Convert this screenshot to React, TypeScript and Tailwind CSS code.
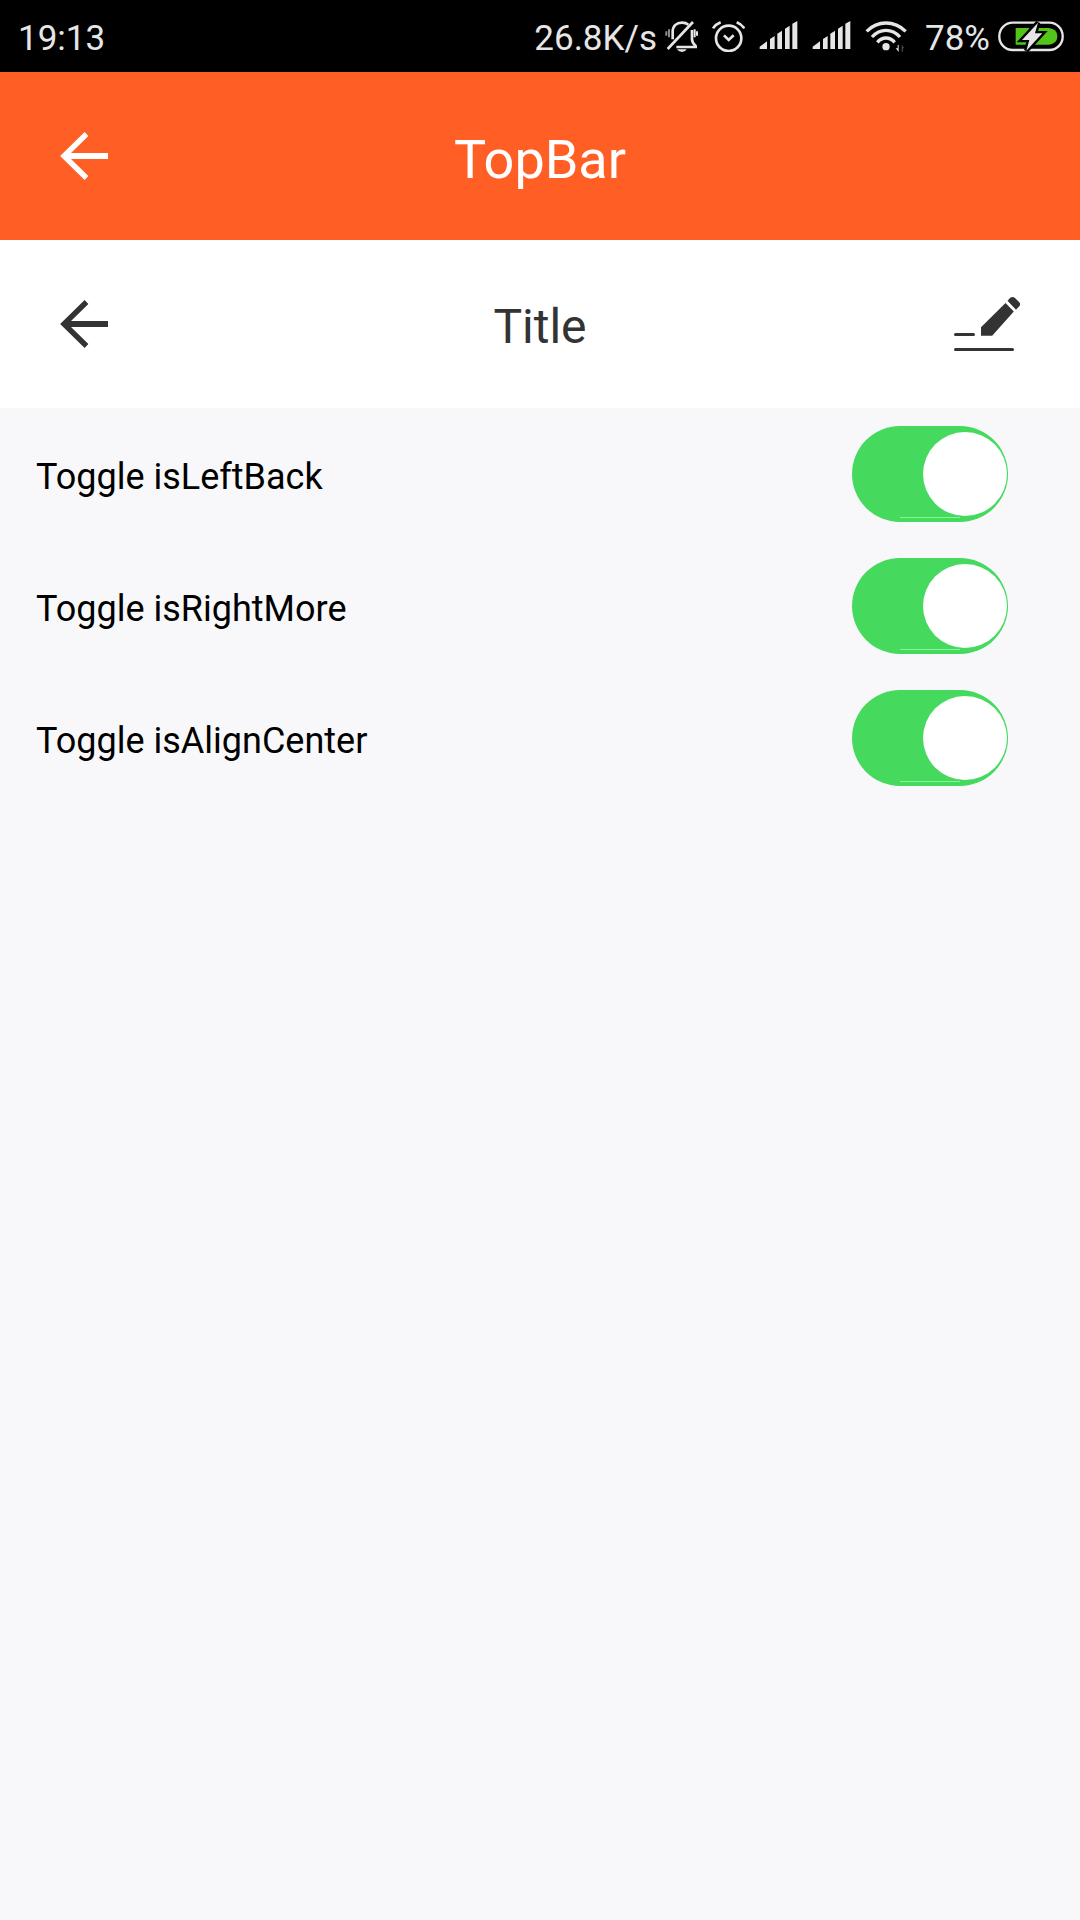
import { useState, type ReactNode } from 'react'

type SwitchRowProps = {
  id: string
  label: string
  checked: boolean
  onChange: (value: boolean) => void
}

type TopBarProps = {
  title: string
  className: string
  titleClassName: string
  isLeftBack?: boolean
  isAlignCenter?: boolean
  right?: ReactNode
}

export default function App() {
  const [isLeftBack, setIsLeftBack] = useState(true)
  const [isRightMore, setIsRightMore] = useState(true)
  const [isAlignCenter, setIsAlignCenter] = useState(true)

  return (
    <div className="min-h-screen bg-[#f8f8fa] font-[Roboto,sans-serif]">
      <StatusBar />

      <header>
        <TopBar
          title="TopBar"
          className="bg-[#ff5f24] text-white"
          titleClassName="pt-2 text-[54px]"
        />
      </header>

      <main>
        <TopBar
          title="Title"
          className="bg-white text-[#333333]"
          titleClassName="pt-1.5 text-5xl"
          isLeftBack={isLeftBack}
          isAlignCenter={isAlignCenter}
          right={
            isRightMore && (
              <button type="button" aria-label="Edit">
                <EditIcon />
              </button>
            )
          }
        />

        <SwitchRow
          id="left-back"
          label="Toggle isLeftBack"
          checked={isLeftBack}
          onChange={setIsLeftBack}
        />
        <SwitchRow
          id="right-more"
          label="Toggle isRightMore"
          checked={isRightMore}
          onChange={setIsRightMore}
        />
        <SwitchRow
          id="align-center"
          label="Toggle isAlignCenter"
          checked={isAlignCenter}
          onChange={setIsAlignCenter}
        />
      </main>
    </div>
  )
}

function TopBar({
  title,
  className,
  titleClassName,
  isLeftBack = true,
  isAlignCenter = true,
  right,
}: TopBarProps) {
  return (
    <div
      className={`grid h-[168px] items-center px-[60px] ${
        isAlignCenter ? 'grid-cols-[1fr_auto_1fr]' : 'grid-cols-[auto_1fr_auto] gap-6'
      } ${className}`}
    >
      <div className="flex items-center">
        {isLeftBack && (
          <button type="button" aria-label="Back">
            <BackIcon />
          </button>
        )}
      </div>
      <h1 className={`leading-none ${titleClassName}`}>{title}</h1>
      <div className="flex items-center justify-end">{right}</div>
    </div>
  )
}

function SwitchRow({ id, label, checked, onChange }: SwitchRowProps) {
  return (
    <div className="flex h-[132px] items-center justify-between pr-[72px] pl-9">
      <label htmlFor={id} className="pt-1.5 text-4xl leading-none text-black">
        {label}
      </label>
      <input
        id={id}
        type="checkbox"
        checked={checked}
        onChange={(e) => onChange(e.target.checked)}
        className="relative flex h-24 w-[156px] cursor-pointer appearance-none items-center rounded-full bg-gray-300 px-px before:size-[84px] before:rounded-full before:bg-white after:absolute after:bottom-1 after:left-12 after:h-px after:w-15 checked:justify-end checked:bg-[#45d95e] checked:after:bg-[#86f596]"
      />
    </div>
  )
}

function StatusBar() {
  return (
    <div className="flex h-[72px] items-center justify-between bg-black pr-4 pl-[18px] text-[35px] leading-none text-[#e6e6e6]">
      <span className="pt-1">19:13</span>
      <div className="flex items-center gap-3.5">
        <div className="flex items-center gap-2">
          <span className="pt-1">26.8K/s</span>
          <MuteIcon />
        </div>
        <AlarmIcon />
        <SignalIcon />
        <SignalIcon />
        <WifiIcon />
        <div className="flex items-center gap-2 pl-1">
          <span className="pt-1">78%</span>
          <BatteryIcon />
        </div>
      </div>
    </div>
  )
}

/* Icons */
function BackIcon() {
  return (
    <svg width="48" height="48" viewBox="0 0 48 48" fill="none" stroke="currentColor">
      <path d="M26.5 2 4 24l22.500 22" strokeWidth="5.400" />
      <path d="M5 24h43" strokeWidth="6" />
    </svg>
  )
}

function EditIcon() {
  return (
    <svg width="66" height="56" viewBox="0 0 66 56" fill="currentColor">
      <rect x="0" y="37" width="21" height="3" rx="1.500" />
      <rect x="0" y="52" width="60" height="3" rx="1.500" />
      <path d="M27 31.300 51.500 7l8.300 8.500L38.200 39.700H27z" />
      <path d="M53.500 4.800 56 2q2.500-2 5 0l4 4q2 2 .5 4l-3.500 3.700z" />
    </svg>
  )
}

function MuteIcon() {
  return (
    <svg width="33" height="32" viewBox="0 0 99 96" fill="none" stroke="currentColor" strokeWidth="8">
      <path d="M23 58V36C23 18 35 8 51 8q12 0 19 6" />
      <path d="M81 30v28c0 8 4 14 11 20v3H34" />
      <path d="M8 87 84 6" />
      <path d="M36 88h29q-4 8-14 8t-15-8z" fill="currentColor" stroke="none" />
      <path d="M4 34v13M12 28v24" strokeWidth="6" opacity="0.600" />
      <path d="M89 28v24M96 34v13" strokeWidth="6" />
    </svg>
  )
}

function AlarmIcon() {
  return (
    <svg width="33" height="32" viewBox="0 0 99 96" fill="none" stroke="currentColor" strokeWidth="8">
      <circle cx="50" cy="55" r="38" />
      <path d="m36 46 14 14 15-14" />
      <path d="M3 25Q11 13 26 7M97 25Q89 13 74 7" />
    </svg>
  )
}

function SignalIcon() {
  return (
    <svg width="39" height="32" viewBox="0 0 117 96" fill="currentColor">
      <path d="M2 87v-7l22-16v23zM33 87V57l14-9v39zM55 87V41l14-9v55zM78 87V26l14-9v70zM100 87V11l15-8v84z" />
    </svg>
  )
}

function WifiIcon() {
  return (
    <svg width="42" height="32" viewBox="0 0 126 96" fill="none" stroke="currentColor" strokeWidth="10">
      <path d="M5 34Q30 9 63 9t59 25" />
      <path d="M21 51q18-20 42-20t42 20" />
      <path d="M37 67q11-13 26-13t26 13" />
      <circle cx="63" cy="80" r="11" fill="currentColor" stroke="none" />
      <path d="M101 75v21l-9-11h6V75z" fill="currentColor" stroke="none" />
      <path d="M110 95V74l9 11h-5v10z" fill="#444444" stroke="none" />
    </svg>
  )
}

function BatteryIcon() {
  return (
    <svg width="66" height="32" viewBox="0 0 198 96">
      <rect x="4" y="8" width="190" height="82" rx="40" fill="none" stroke="currentColor" strokeWidth="7" />
      <path d="M53 24h100q25 3 25 25t-25 25H53z" fill="#52c41a" />
      <path
        d="M120 8 72 60h22l-9 32 48-52h-22z"
        fill="currentColor"
        stroke="#000000"
        strokeWidth="14"
        paintOrder="stroke"
      />
    </svg>
  )
}
